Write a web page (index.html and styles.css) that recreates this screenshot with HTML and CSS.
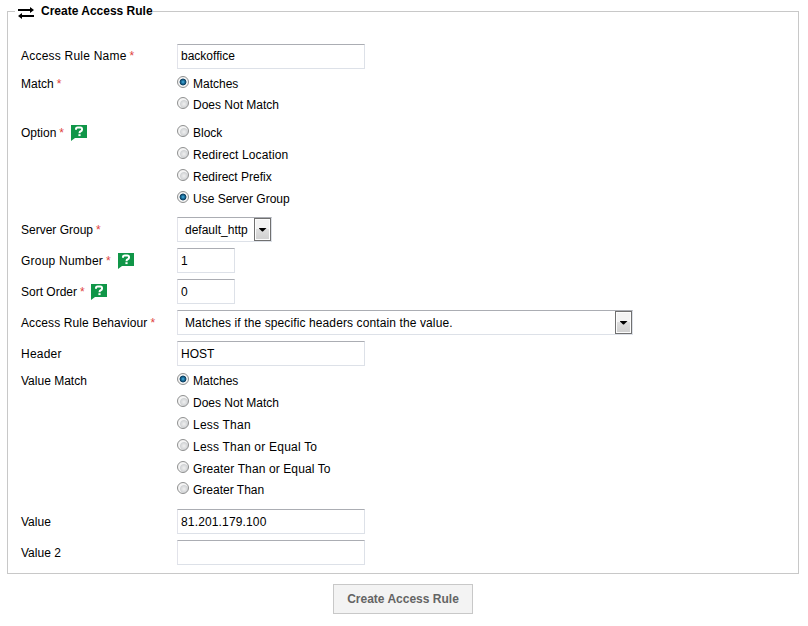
FILE: index.html
```html
<!DOCTYPE html>
<html lang="en">
<head>
<meta charset="utf-8">
<title>Create Access Rule</title>
<link rel="stylesheet" href="styles.css">
</head>
<body>
<svg width="0" height="0" class="defs">
  <symbol id="help" viewBox="0 0 16 16">
    <path fill="#109648" d="M0 0h16v13H4L0 16z"/>
    <path fill="none" stroke="#fff" stroke-width="2" d="M5 4.700V4q0-1.500 1.500-1.500h3Q11 2.500 11 4v.8q0 1-1.200 1.500Q8.500 6.800 8.500 8.200"/>
    <path fill="#fff" d="M7.400 9.200h2.200v1.900H7.400z"/>
  </symbol>
</svg>
<form>
  <section class="panel">
    <h1 class="legend">
      <svg class="swap" width="16" height="12" viewBox="0 0 16 12"><path d="M0 2h12V0l4 3-4 3V4H0zM16 8H4V6L0 9l4 3v-2h12z"/></svg>
      <span>Create Access Rule</span>
    </h1>
    <div class="row name"><div class="label"><span class="loose">Access Rule Name</span><i>*</i></div><input class="text" value="backoffice"></div>
    <div class="row group match"><div class="label"><span>Match</span><i>*</i></div>
      <div class="radios">
        <label><input type="radio" name="match" checked><span>Matches</span></label>
        <label class="short"><input type="radio" name="match"><span>Does Not Match</span></label>
      </div>
    </div>
    <div class="row group option"><div class="label"><span>Option</span><i>*</i><svg class="help" width="16" height="16"><use href="#help"/></svg></div>
      <div class="radios">
        <label><input type="radio" name="option"><span>Block</span></label>
        <label><input type="radio" name="option"><span class="wider">Redirect Location</span></label>
        <label><input type="radio" name="option"><span>Redirect Prefix</span></label>
        <label><input type="radio" name="option" checked><span>Use Server Group</span></label>
      </div>
    </div>
    <div class="row"><div class="label"><span>Server Group</span><i>*</i></div><div class="select small"><span>default_http</span><b class="arrow"></b></div></div>
    <div class="row"><div class="label"><span class="loose">Group Number</span><i>*</i><svg class="help" width="16" height="16"><use href="#help"/></svg></div><input class="text num" value="1"></div>
    <div class="row"><div class="label"><span>Sort Order</span><i>*</i><svg class="help near" width="16" height="16"><use href="#help"/></svg></div><input class="text num" value="0"></div>
    <div class="row"><div class="label"><span class="wider">Access Rule Behaviour</span><i>*</i></div><div class="select wide"><span class="wider">Matches if the specific headers contain the value.</span><b class="arrow"></b></div></div>
    <div class="row"><div class="label"><span class="loose">Header</span></div><input class="text" value="HOST"></div>
    <div class="row group values"><div class="label"><span>Value Match</span></div>
      <div class="radios">
        <label><input type="radio" name="value" checked><span>Matches</span></label>
        <label><input type="radio" name="value"><span>Does Not Match</span></label>
        <label><input type="radio" name="value"><span class="loose">Less Than</span></label>
        <label><input type="radio" name="value"><span class="loose">Less Than or Equal To</span></label>
        <label><input type="radio" name="value"><span class="wider">Greater Than or Equal To</span></label>
        <label class="short"><input type="radio" name="value"><span>Greater Than</span></label>
      </div>
    </div>
    <div class="row"><div class="label"><span>Value</span></div><input class="text ip" value="81.201.179.100"></div>
    <div class="row"><div class="label"><span>Value 2</span></div><input class="text" value=""></div>
  </section>
  <button type="button" class="submit">Create Access Rule</button>
</form>
</body>
</html>
```

FILE: styles.css
```css
* { box-sizing: border-box; }
body {
  margin: 0;
  background: #fff;
  color: #000;
  font: 12px/22px "Liberation Sans", Arial, sans-serif;
}
.defs { position: absolute; }
.panel {
  width: 792px;
  height: 563px;
  margin: 11px 0 10px 7px;
  padding-left: 13px;
  border: 1px solid #c8c8c8;
}
.legend {
  display: flex;
  align-items: center;
  width: max-content;
  height: 22px;
  margin: -12px 0 19px -6px;
  padding-left: 3px;
  background: #fff;
  font-size: 12px;
  font-weight: bold;
}
.swap { margin: 4px 7px 0 0; }
.row { display: flex; align-items: center; height: 31px; }
.label { display: flex; align-items: center; width: 156px; }
.label i { margin-left: 3px; color: #e0443e; font-style: normal; }
.help { margin-left: 7px; }
.near { margin-left: 6px; }
.loose { letter-spacing: 0.22px; }
.wider { letter-spacing: 0.11px; }
.name .label { padding-bottom: 2px; }
.name .text { padding-bottom: 2px; }
.group { align-items: flex-start; height: auto; }
.match { padding: 1px 0 7px; }
.option { padding-bottom: 4px; }
.values { padding: 1px 0 6px; }
.radios label { display: flex; align-items: center; height: 22px; }
.radios label.short { height: 20px; }
.radios input {
  appearance: none;
  width: 12px;
  height: 12px;
  margin: 0 4px 5px 0;
  border: 1px solid #8e8f8f;
  border-radius: 50%;
  background: radial-gradient(circle at 60% 60%, #f0f0f0 0, #d2d4d6 3.500px, #f4f4f4 4.500px);
}
.radios input:checked {
  background: radial-gradient(circle at 5px 5px, #54b8e4 0, #2380b0 1.200px, #0d3f60 3px, #f4f4f4 3.800px);
}
.text, .select {
  width: 188px;
  height: 25px;
  border: 1px solid #dde1e8;
  border-top-color: #abadb3;
  border-left-color: #e2e3ea;
  background: #fff;
  color: #000;
}
.text { padding: 0 3px; font: inherit; }
.ip { letter-spacing: 0.15px; }
.num { width: 58px; }
.select { display: flex; justify-content: space-between; padding-left: 7px; line-height: 24px; }
.small { width: 95px; }
.wide { width: 456px; }
.arrow {
  display: flex;
  align-items: center;
  justify-content: center;
  width: 17px;
  height: 23px;
  border: 1px solid #707070;
  background: linear-gradient(#f3f3f3 0 48%, #dedede 49%, #cfcfcf);
  box-shadow: inset 0 0 0 1px #fcfcfc;
}
.arrow::after {
  content: "";
  width: 8px;
  height: 4px;
  background: #000;
  clip-path: polygon(0 0, 100% 0, 100% 15%, 55% 100%, 45% 100%, 0 15%);
}
.submit {
  display: block;
  width: 140px;
  height: 30px;
  margin-left: 333px;
  padding: 0;
  border: 1px solid #c8c8c8;
  background: #f3f3f3;
  color: #646464;
  font: bold 12px "Liberation Sans", Arial, sans-serif;
}
```
